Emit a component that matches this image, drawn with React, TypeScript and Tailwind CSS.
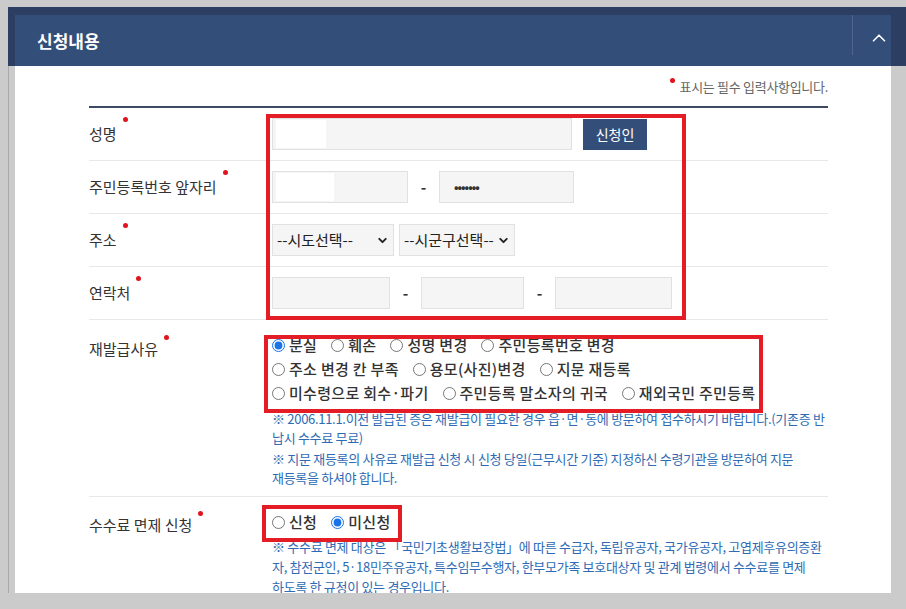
import { ChevronUp, ChevronDown } from "lucide-react";

const font = "font-['Noto_Sans_CJK_KR','Malgun_Gothic',sans-serif]";

function Dot({ up = 15 }: { up?: number }) {
  return (
    <span
      className={`inline-block w-[5px] h-[5px] rounded-full bg-[#e1141e] ml-[6px] ${up === 15 ? "-translate-y-[15px]" : "-translate-y-[7px]"}`}
    />
  );
}

function Radio({ label, checked }: { label: string; checked?: boolean }) {
  return (
    <label className="flex items-center mr-[14px] whitespace-nowrap">
      <input type="radio" defaultChecked={checked} name={label} className="m-0 w-[13px] h-[13px] accent-[#1a73e8]" />
      <span className="ml-[4px] tracking-[0.3px]">{label}</span>
    </label>
  );
}

function Field({ w, blank }: { w: string; blank?: string }) {
  return (
    <div className={`${w} h-[32px] bg-[#f5f5f5] border border-[#e1e1e1] flex items-center pl-[3px]`}>
      {blank && <div className={`${blank} h-[28px] bg-white`} />}
    </div>
  );
}

function Dash() {
  return <span className="w-[31px] text-center text-[15px] font-bold text-[#333]">-</span>;
}

function Select({ w, text }: { w: string; text: string }) {
  return (
    <div className={`${w} h-[32px] bg-[#f5f5f5] border border-[#e1e1e1] flex items-center justify-between pl-[4px] pr-[4px] text-[15px] text-[#222]`}>
      <span className="whitespace-nowrap">{text}</span>
      <ChevronDown size={13} strokeWidth={3.5} className="text-[#222] shrink-0" />
    </div>
  );
}

export default function App() {
  const label = "w-[183px] shrink-0 flex items-center text-[15px] text-[#333]";
  const row = "flex h-[53px] border-b border-[#e8e8e8]";
  const note = "text-[13px] text-[#2e6bb4] whitespace-nowrap tracking-[-0.3px]";

  return (
    <div className={`w-[906px] h-[609px] bg-[#cbcbcb] overflow-hidden ${font}`}>
      <div className="ml-[8px] mt-[7px] h-[59px] bg-[#2c3f62] pt-[8px] pl-[7px] pr-[15px]">
        <div className="h-[51px] bg-[#344e7a] flex">
          <div className="flex-1 flex items-center pl-[22px] text-[17px] font-bold text-white">신청내용</div>
          <div className="w-[39px] flex">
            <div className="w-px h-[40px] bg-[#4d6590]" />
            <div className="flex-1 flex items-center justify-center pl-[14px] pb-[6px]">
              <ChevronUp size={22} strokeWidth={1.8} className="text-white" />
            </div>
          </div>
        </div>
      </div>

      <div className="flex">
        <div className="w-[15px] h-[527px] pl-[8px]">
          <div className="h-full border-l border-[#aaaaaa]" />
        </div>
        <div className="w-[876px] h-[527px] bg-white overflow-hidden pl-[74px] pr-[63px] pt-[12px]">
          <div className="flex justify-end items-center text-[13px] text-[#666] h-[18px] tracking-[-0.3px]">
            <Dot up={7} />
            <span className="ml-[5px]">표시는 필수 입력사항입니다.</span>
          </div>

          <div className="relative mt-[10px] border-t-2 border-[#3c4b61] text-[#333]">
            <div className={row}>
              <div className={label}>성명<Dot /></div>
              <div className="flex items-center">
                <Field w="w-[300px]" blank="w-[50px]" />
                <div className="ml-[11px] w-[64px] h-[31px] bg-[#344e7a] text-white text-[14px] flex items-center justify-center">신청인</div>
              </div>
            </div>

            <div className={row}>
              <div className={label}>주민등록번호 앞자리<Dot /></div>
              <div className="flex items-center">
                <Field w="w-[136px]" blank="w-[58px]" />
                <Dash />
                <div className="w-[135px] h-[32px] bg-[#f5f5f5] border border-[#e1e1e1] flex items-center pl-[14px] text-[12px] font-bold tracking-[-1px] text-[#333]">•••••••</div>
              </div>
            </div>

            <div className={row}>
              <div className={label}>주소<Dot /></div>
              <div className="flex items-center gap-[5px]">
                <Select w="w-[122px]" text="--시도선택--" />
                <Select w="w-[116px]" text="--시군구선택--" />
              </div>
            </div>

            <div className={row}>
              <div className={label}>연락처<Dot /></div>
              <div className="flex items-center">
                <Field w="w-[118px]" />
                <Dash />
                <Field w="w-[103px]" />
                <Dash />
                <Field w="w-[117px]" />
              </div>
            </div>

            <div className="flex h-[177px] border-b border-[#e8e8e8]">
              <div className="w-[183px] shrink-0 text-[15px] pt-[19px] leading-[20px] flex items-start">
                재발급사유<span className="inline-block w-[5px] h-[5px] rounded-full bg-[#e1141e] ml-[6px] -mt-[4px]" />
              </div>
              <div className="pt-[13px]">
                <div className="text-[15px] font-medium leading-[24px] text-[#333]">
                  <div className="flex">
                    <Radio label="분실" checked />
                    <Radio label="훼손" />
                    <Radio label="성명 변경" />
                    <Radio label="주민등록번호 변경" />
                  </div>
                  <div className="flex">
                    <Radio label="주소 변경 칸 부족" />
                    <Radio label="용모(사진)변경" />
                    <Radio label="지문 재등록" />
                  </div>
                  <div className="flex">
                    <Radio label="미수령으로 회수·파기" />
                    <Radio label="주민등록 말소자의 귀국" />
                    <Radio label="재외국민 주민등록" />
                  </div>
                </div>
                <div className="mt-[4px] leading-[19px]">
                  <p className={note}>※ 2006.11.1.이전 발급된 증은 재발급이 필요한 경우 읍·면·동에 방문하여 접수하시기 바랍니다.(기존증 반</p>
                  <p className={note}>납시 수수료 무료)</p>
                  <p className={`${note} mt-[2px]`}>※ 지문 재등록의 사유로 재발급 신청 시 신청 당일(근무시간 기준) 지정하신 수령기관을 방문하여 지문</p>
                  <p className={note}>재등록을 하셔야 합니다.</p>
                </div>
              </div>
            </div>

            <div className="flex h-[120px]">
              <div className="w-[183px] shrink-0 text-[15px] pt-[18px] leading-[20px] flex items-start">
                수수료 면제 신청<span className="inline-block w-[5px] h-[5px] rounded-full bg-[#e1141e] ml-[6px] -mt-[4px]" />
              </div>
              <div className="pt-[13px]">
                <div className="flex text-[15px] font-medium leading-[24px] text-[#333]">
                  <Radio label="신청" />
                  <Radio label="미신청" checked />
                </div>
                <div className="mt-[3px] leading-[20px]">
                  <p className={note}>※ 수수료 면제 대상은 「국민기초생활보장법」에 따른 수급자, 독립유공자, 국가유공자, 고엽제후유의증환</p>
                  <p className={note}>자, 참전군인, 5·18민주유공자, 특수임무수행자, 한부모가족 보호대상자 및 관계 법령에서 수수료를 면제</p>
                  <p className={note}>하도록 한 규정이 있는 경우입니다.</p>
                </div>
              </div>
            </div>

            <div className="absolute left-[177px] top-[6px] w-[420px] h-[206px] border-4 border-[#e31c25]" />
            <div className="absolute left-[175px] top-[227px] w-[499px] h-[78px] border-4 border-[#e31c25]" />
            <div className="absolute left-[173px] top-[397px] w-[140px] h-[37px] border-4 border-[#e31c25]" />
          </div>
        </div>
      </div>
    </div>
  );
}
